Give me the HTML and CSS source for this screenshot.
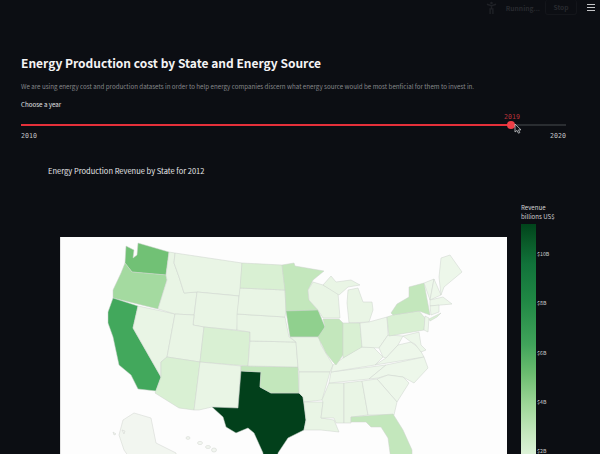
FILE: index.html
```html
<!DOCTYPE html>
<html lang="en">
<head>
<meta charset="utf-8">
<title>Energy Production</title>
<link rel="stylesheet" href="styles.css">
</head>
<body>
<div class="app">
  <header class="topbar">
    <svg class="runner" viewBox="0 0 12 14"><circle cx="6" cy="2" r="1.4"/><path d="M1 3.5 L6 5 L11 3.5 M6 5 V9 M4.5 14 V8.5 H7.5 V14" /></svg>
    <span class="running">Running...</span>
    <span class="stop">Stop</span>
    <span class="burger"><i></i><i></i><i></i></span>
  </header>
  <main class="content">
    <h1 class="title">Energy Production cost by State and Energy Source</h1>
    <p class="intro">We are using energy cost and production datasets in order to help energy companies discern what energy source would be most benficial for them to invest in.</p>
    <div class="slider-label">Choose a year</div>
    <div class="slider">
      <div class="track"><div class="fill"></div></div>
      <span class="value">2019</span>
      <span class="thumb"></span>
      <svg class="cursor" viewBox="0 0 8 11"><path d="M1 1 V9 L3 7.4 L4.4 10.2 L5.8 9.6 L4.5 6.9 L7 6.8 Z"/></svg>
    </div>
    <div class="range"><span>2010</span><span>2020</span></div>
    <h2 class="chart-title">Energy Production Revenue by State for 2012</h2>
    <div class="chart">
      <div class="map">
        <svg viewBox="60 237 447 217" width="447" height="217">
          <g class="states">
            <path class="g6" d="M125 246 L133 250 L132 258 L136 255 L137 243 L168 252 L165 275 L131 272 L124 263Z"/>
            <path class="g4" d="M124 263 L131 272 L165 275 L166 280 L157 309 L112 298 L112 290 L120 273Z"/>
            <path class="g7" d="M112 298 L137 306 L132 328 L160 377 L155 391 L137 389 L130 375 L118 365 L112 337 L107 323 L107 312Z"/>
            <path class="g1" d="M137 306 L174 314 L166 357 L160 362 L160 377 L132 328Z"/>
            <path class="g1" d="M168 252 L174 253 L173 263 L178 277 L183 293 L196 292 L193 315 L174 314 L157 309 L166 280 L165 275Z"/>
            <path class="g1" d="M174 253 L241 263 L239 296 L196 292 L183 293 L178 277 L173 263Z"/>
            <path class="g1" d="M196 292 L238 296 L236 330 L203 327 L192 325Z"/>
            <path class="g1" d="M174 314 L193 315 L192 325 L203 327 L199 362 L166 357Z"/>
            <path class="g2" d="M203 327 L249 332 L247 366 L199 362Z"/>
            <path class="g2" d="M166 357 L199 362 L193 410 L178 408 L154 393 L160 377 L160 362Z"/>
            <path class="g1" d="M199 362 L240 366 L237 408 L211 407 L198 410 L193 410Z"/>
            <path class="g9" d="M240 371 L260 372 L259 387 L270 393 L298 393 L302 397 L305 420 L303 430 L287 438 L277 453 L276 470 L262 470 L262 453 L253 433 L247 428 L235 433 L225 427 L222 417 L211 407 L237 408Z"/>
            <path class="g3" d="M240 366 L297 367 L298 393 L270 393 L259 387 L260 372 L240 371Z"/>
            <path class="g1" d="M249 341 L295 342 L297 367 L247 366Z"/>
            <path class="g1" d="M236 314 L270 316 L284 317 L288 337 L295 342 L249 341 L249 332 L236 330Z"/>
            <path class="g1" d="M239 288 L284 290 L285 310 L284 317 L236 314Z"/>
            <path class="g2" d="M241 263 L281 265 L284 290 L239 288Z"/>
            <path class="g3" d="M281 265 L293 263 L294 266 L323 271 L312 280 L307 290 L308 300 L317 310 L285 311 L284 290Z"/>
            <path class="g5" d="M285 311 L317 310 L324 327 L318 337 L289 337Z"/>
            <path class="g1" d="M289 337 L318 337 L320 345 L332 365 L329 372 L298 372 L297 367 L295 342Z"/>
            <path class="g1" d="M298 372 L329 372 L321 400 L303 402 L302 397 L298 393Z"/>
            <path class="g1" d="M303 402 L322 402 L320 418 L333 420 L338 432 L320 430 L303 430 L305 420Z"/>
            <path class="g1" d="M328 383 L343 383 L343 423 L335 423 L333 418 L320 418 L322 402 L321 400Z"/>
            <path class="g1" d="M343 383 L361 381 L367 415 L350 417 L350 423 L343 423Z"/>
            <path class="g0" d="M330 372 L385 365 L368 379 L328 383Z"/>
            <path class="g0" d="M332 365 L342 358 L360 347 L372 347 L382 357 L374 365 L330 372Z"/>
            <path class="g3" d="M322 319 L338 319 L342 323 L342 355 L335 365 L332 362 L325 353 L317 337 L324 327Z"/>
            <path class="g1" d="M312 282 L322 285 L337 293 L339 318 L322 318 L317 310 L308 300 L307 290Z"/>
            <path class="g1" d="M322 285 L330 276 L335 282 L350 280 L359 285 L347 287 L338 295Z"/>
            <path class="g1" d="M347 290 L357 288 L362 302 L371 302 L372 310 L368 322 L348 323 L346 303Z"/>
            <path class="g2" d="M342 323 L359 323 L361 347 L342 358Z"/>
            <path class="g0" d="M359 323 L368 322 L386 317 L387 335 L378 348 L361 347Z"/>
            <path class="g0" d="M387 335 L402 336 L397 345 L385 358 L382 357 L378 348Z"/>
            <path class="g0" d="M374 365 L385 358 L397 345 L410 342 L418 348 L423 357Z"/>
            <path class="g0" d="M368 379 L385 365 L423 357 L427 368 L413 383 L402 377 L387 375 L377 378Z"/>
            <path class="g0" d="M376 379 L387 375 L402 377 L408 383 L396 402 L383 387Z"/>
            <path class="g0" d="M361 381 L376 379 L396 402 L393 415 L367 415Z"/>
            <path class="g3" d="M350 417 L392 414 L402 430 L411 450 L411 460 L390 460 L387 438 L380 427 L370 427 L365 422 L350 422Z"/>
            <path class="g2" d="M386 317 L392 315 L418 311 L424 318 L423 330 L388 336Z"/>
            <path class="g3" d="M390 313 L396 304 L408 297 L408 287 L423 283 L429 315 L418 311 L392 315Z"/>
            <path class="g0" d="M424 316 L428 318 L427 332 L423 330Z"/>
            <path class="g0" d="M402 336 L418 332 L420 345 L425 350 L420 352 L414 344 L410 342Z"/>
            <path class="g0" d="M423 283 L433 279 L429 300Z"/>
            <path class="g0" d="M433 279 L440 295 L429 300Z"/>
            <path class="g0" d="M438 277 L440 258 L449 255 L461 272 L443 287 L440 295Z"/>
            <path class="g0" d="M429 300 L442 297 L451 304 L429 306Z"/>
            <path class="g0" d="M429 306 L438 305 L438 312 L430 315Z"/>
            <path class="g2" d="M428 319 L440 313 L436 317 L429 321Z"/>
          </g>
          <g class="outer">
            <path d="M122 420 L133 413 L150 418 L155 443 L175 453 L175 460 L130 460 L123 450 L118 435Z"/>
            <path d="M112 432 L115 434 L113 435Z M121 430 L124 431 L123 434Z"/>
            <ellipse cx="187" cy="438" rx="2" ry="1.4"/>
            <ellipse cx="199" cy="443" rx="2.5" ry="1.6"/>
            <ellipse cx="207" cy="447" rx="2.5" ry="1.5"/>
            <ellipse cx="213" cy="450" rx="2.5" ry="2"/>
          </g>
        </svg>
      </div>
      <div class="legend">
        <div class="legend-title">Revenue<br>billions US$</div>
        <div class="scale">
          <div class="bar"></div>
          <div class="ticks">
            <span>$10B</span><span>$8B</span><span>$6B</span><span>$4B</span><span>$2B</span>
          </div>
        </div>
      </div>
    </div>
  </main>
</div>
</body>
</html>
```

FILE: styles.css
```css
* { box-sizing: border-box; }
html, body { margin: 0; padding: 0; background: #0c0e13; }
.app {
  width: 600px;
  height: 454px;
  overflow: hidden;
  font-family: "Noto Sans CJK SC", "Noto Sans", sans-serif;
}
.topbar {
  height: 15px;
  display: flex;
  align-items: center;
  justify-content: flex-end;
  color: #282a2f;
}
.runner { width: 11px; height: 13px; margin-right: 9px; }
.runner circle { fill: #1f2126; }
.runner path { fill: none; stroke: #1f2126; stroke-width: 1.6; }
.running { font-size: 6.7px; font-weight: 700; margin-right: 5px; }
.stop {
  font-size: 6.7px;
  font-weight: 700;
  width: 32px;
  height: 15px;
  line-height: 15px;
  text-align: center;
  border: 1px solid #14161b;
  border-top: 0;
  border-radius: 3px;
  margin-right: 10px;
}
.burger { display: flex; flex-direction: column; gap: 2px; width: 8px; margin-right: 5px; }
.burger i { display: block; height: 1px; background: #c4c5c7; }
.content { padding: 39px 34px 0 21px; }
.title {
  margin: 0;
  font-size: 12px;
  line-height: 18px;
  font-weight: 700;
  color: #f4f4f5;
}
.intro {
  margin: 9px 0 0;
  font-size: 6.2px;
  line-height: 12px;
  color: #85878a;
}
.slider-label {
  margin-top: 6px;
  font-size: 6.2px;
  line-height: 12px;
  color: #e2e3e4;
}
.slider { position: relative; height: 8px; margin-top: 10px; }
.track { height: 2px; background: #2a2d31; position: relative; top: 3px; }
.fill { height: 2px; width: 490px; background: #e5303a; }
.value {
  position: absolute;
  left: 483px;
  top: -9px;
  font-family: "DejaVu Sans Mono", monospace;
  font-size: 6.6px;
  line-height: 10px;
  color: #b8333a;
}
.thumb {
  position: absolute;
  left: 486px;
  top: 0;
  width: 8px;
  height: 8px;
  border-radius: 50%;
  background: #ee3f47;
}
.cursor { position: absolute; left: 493px; top: 2px; width: 8px; height: 11px; }
.cursor path { fill: #111318; stroke: #c8c9cb; stroke-width: 0.8; }
.range {
  display: flex;
  justify-content: space-between;
  margin-top: 2px;
  font-family: "DejaVu Sans Mono", monospace;
  font-size: 6.6px;
  line-height: 10px;
  color: #c3c4c6;
}
.chart-title {
  margin: 23px 0 0 27px;
  font-size: 7.5px;
  line-height: 13px;
  font-weight: 400;
  color: #e6e7e8;
}
.chart { display: flex; align-items: flex-start; margin-top: 26px; }
.map {
  width: 447px;
  height: 218px;
  margin: 34px 0 0 39px;
  background: #fdfdfd;
  border-left: 1px solid #e4e4e4;
  border-bottom: 1px solid #a9aaa9;
  flex: none;
}
.map svg { display: block; }
.states path { stroke: #cdd2cd; stroke-width: 0.5; stroke-linejoin: round; }
.outer path, .outer ellipse { fill: #f2f6f0; stroke: #d6dad5; stroke-width: 0.6; }
.g0 { fill: #edf7ea; }
.g1 { fill: #e9f5e5; }
.g2 { fill: #d9f0d3; }
.g3 { fill: #c3e7bc; }
.g4 { fill: #a4daa0; }
.g5 { fill: #90d08e; }
.g6 { fill: #71c175; }
.g7 { fill: #42a85c; }
.g9 { fill: #02401b; }
.legend { margin: 0 0 0 14px; flex: none; }
.legend-title { font-size: 6.1px; line-height: 9px; color: #d2d3d5; }
.scale { display: flex; margin-top: 3px; }
.bar {
  width: 15px;
  height: 232px;
  background: linear-gradient(#00441b 0, #0a5c2a 20px, #11723a 40px, #1f8744 75px, #40a35a 120px, #6cbd70 150px, #9dd697 180px, #c6e8bf 210px, #dff3da 232px);
}
.ticks {
  display: flex;
  flex-direction: column;
  padding-top: 26px;
  margin-left: 1px;
  gap: 41.3px;
  font-size: 5.3px;
  line-height: 8px;
  color: #c9cacc;
}
```
